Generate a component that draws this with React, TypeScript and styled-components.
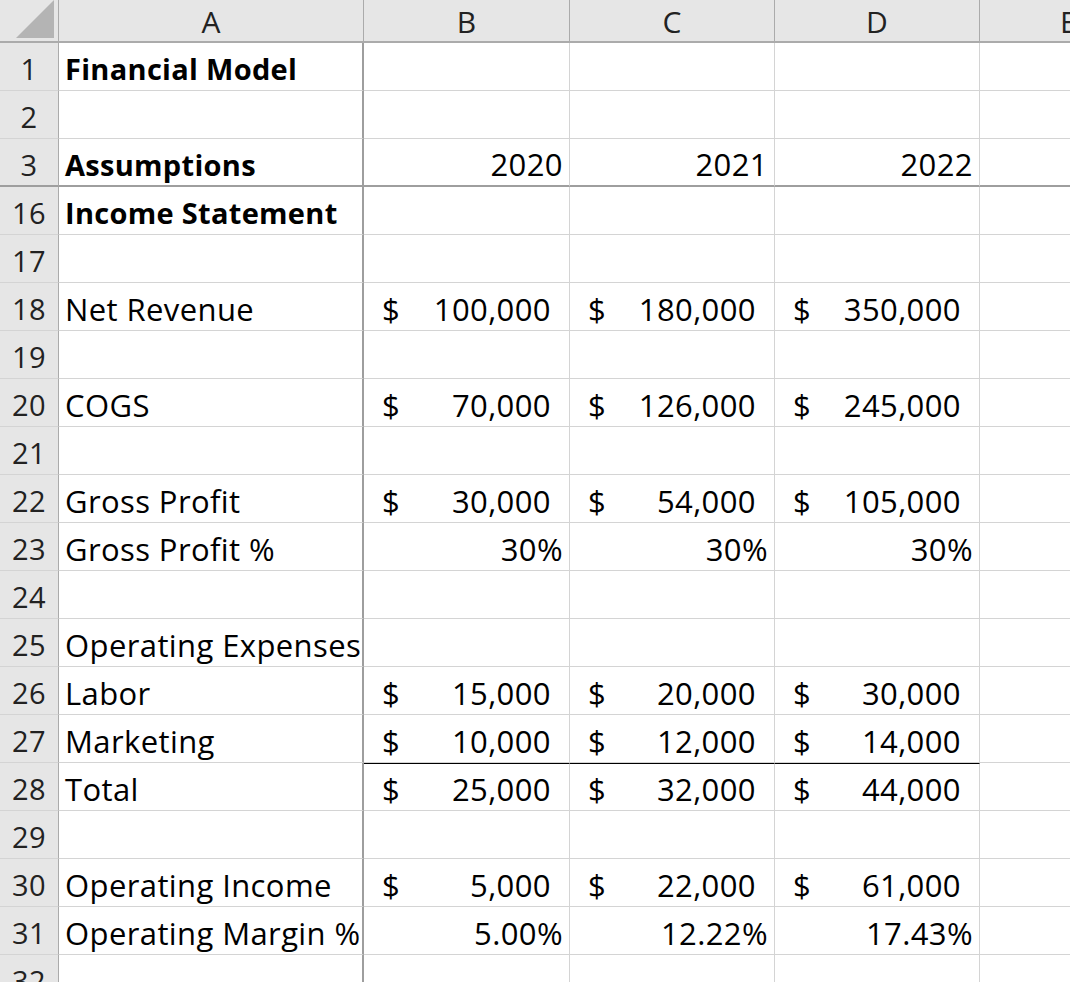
import React from "react";
import styled, { createGlobalStyle, css } from "styled-components";

const Global = createGlobalStyle`
  html, body { margin: 0; padding: 0; background: #fff; overflow: hidden; }
  body { font-family: "Open Sans", "Noto Sans", sans-serif; color: #000; }
`;

const Grid = styled.div`
  display: grid;
  grid-template-columns: 59px 305px 206px 205px 205px 120px;
  grid-auto-rows: 48px;
  grid-template-rows: 43px;
  width: 1070px;
  height: 982px;
  overflow: hidden;
  font-size: 31px;
  letter-spacing: 0.4px;
`;

const Head = styled.div<{ $last?: boolean }>`
  background: #e6e6e6;
  border-right: 1px solid #ababab;
  border-bottom: 2px solid #ababab;
  display: flex;
  align-items: center;
  justify-content: center;
  font-size: 30px;
  letter-spacing: 0;
  color: #222;
  box-sizing: border-box;
  padding-top: 2px;
  ${(p) => p.$last && css`justify-content: flex-start; padding-left: 80px;`}
`;

const Corner = styled(Head)`
  position: relative;
`;

const Tri = styled.div`
  position: absolute;
  right: 4px;
  bottom: 3px;
  width: 0;
  height: 0;
  border-left: 38px solid transparent;
  border-bottom: 38px solid #b4b4b4;
`;

const RowNum = styled.div<{ $freeze?: boolean }>`
  background: #e6e6e6;
  border-right: 1px solid #ababab;
  border-bottom: ${(p) => (p.$freeze ? "2px solid #9e9e9e" : "1px solid #d4d4d4")};
  display: flex;
  align-items: center;
  justify-content: center;
  box-sizing: border-box;
  color: #222;
  padding-top: 4px;
  font-size: 29px;
  letter-spacing: 0.5px;
`;

const Cell = styled.div<{
  $colA?: boolean;
  $freeze?: boolean;
  $bold?: boolean;
  $align?: "left" | "right";
  $topLine?: boolean;
}>`
  box-sizing: border-box;
  border-right: ${(p) => (p.$colA ? "2px solid #9e9e9e" : "1px solid #d4d4d4")};
  border-bottom: ${(p) => (p.$freeze ? "2px solid #9e9e9e" : "1px solid #d4d4d4")};
  ${(p) => p.$topLine && css`border-top: 1px solid #000;`}
  display: flex;
  align-items: center;
  padding: 4px 6px 0 6px;
  white-space: nowrap;
  overflow: visible;
  font-weight: ${(p) => (p.$bold ? 700 : 400)};
  ${(p) => p.$bold && css`font-size: 29px; letter-spacing: 0.3px;`}
  justify-content: ${(p) => (p.$align === "right" ? "flex-end" : "flex-start")};
`;

const Dollar = styled.span`
  padding-left: 12px;
`;
const Amount = styled.span`
  margin-left: auto;
  padding-right: 12px;
`;

type Val = null | { t: "acc"; v: string } | { t: "r"; v: string };
type Row = { n: number; a: string; bold?: boolean; vals?: Val[]; line?: boolean; freeze?: boolean };

const acc = (v: string): Val => ({ t: "acc", v });
const r = (v: string): Val => ({ t: "r", v });

const rows: Row[] = [
  { n: 1, a: "Financial Model", bold: true },
  { n: 2, a: "" },
  { n: 3, a: "Assumptions", bold: true, vals: [r("2020"), r("2021"), r("2022")], freeze: true },
  { n: 16, a: "Income Statement", bold: true },
  { n: 17, a: "" },
  { n: 18, a: "Net Revenue", vals: [acc("100,000"), acc("180,000"), acc("350,000")] },
  { n: 19, a: "" },
  { n: 20, a: "COGS", vals: [acc("70,000"), acc("126,000"), acc("245,000")] },
  { n: 21, a: "" },
  { n: 22, a: "Gross Profit", vals: [acc("30,000"), acc("54,000"), acc("105,000")] },
  { n: 23, a: "Gross Profit %", vals: [r("30%"), r("30%"), r("30%")] },
  { n: 24, a: "" },
  { n: 25, a: "Operating Expenses" },
  { n: 26, a: "Labor", vals: [acc("15,000"), acc("20,000"), acc("30,000")] },
  { n: 27, a: "Marketing", vals: [acc("10,000"), acc("12,000"), acc("14,000")] },
  { n: 28, a: "Total", vals: [acc("25,000"), acc("32,000"), acc("44,000")], line: true },
  { n: 29, a: "" },
  { n: 30, a: "Operating Income", vals: [acc("5,000"), acc("22,000"), acc("61,000")] },
  { n: 31, a: "Operating Margin %", vals: [r("5.00%"), r("12.22%"), r("17.43%")] },
  { n: 32, a: "" },
];

export default function App() {
  return (
    <>
      <Global />
      <Grid>
        <Corner><Tri /></Corner>
        <Head>A</Head>
        <Head>B</Head>
        <Head>C</Head>
        <Head>D</Head>
        <Head $last>E</Head>
        {rows.map((row) => (
          <React.Fragment key={row.n}>
            <RowNum $freeze={row.freeze}>{row.n}</RowNum>
            <Cell $colA $bold={row.bold} $freeze={row.freeze}>{row.a}</Cell>
            {[0, 1, 2].map((i) => {
              const v = row.vals ? row.vals[i] : null;
              return (
                <Cell
                  key={i}
                  $freeze={row.freeze}
                  $topLine={row.line}
                  $align={v && v.t === "r" ? "right" : "left"}
                >
                  {v && v.t === "acc" && (
                    <>
                      <Dollar>$</Dollar>
                      <Amount>{v.v}</Amount>
                    </>
                  )}
                  {v && v.t === "r" && v.v}
                </Cell>
              );
            })}
            <Cell $freeze={row.freeze} />
          </React.Fragment>
        ))}
      </Grid>
    </>
  );
}
